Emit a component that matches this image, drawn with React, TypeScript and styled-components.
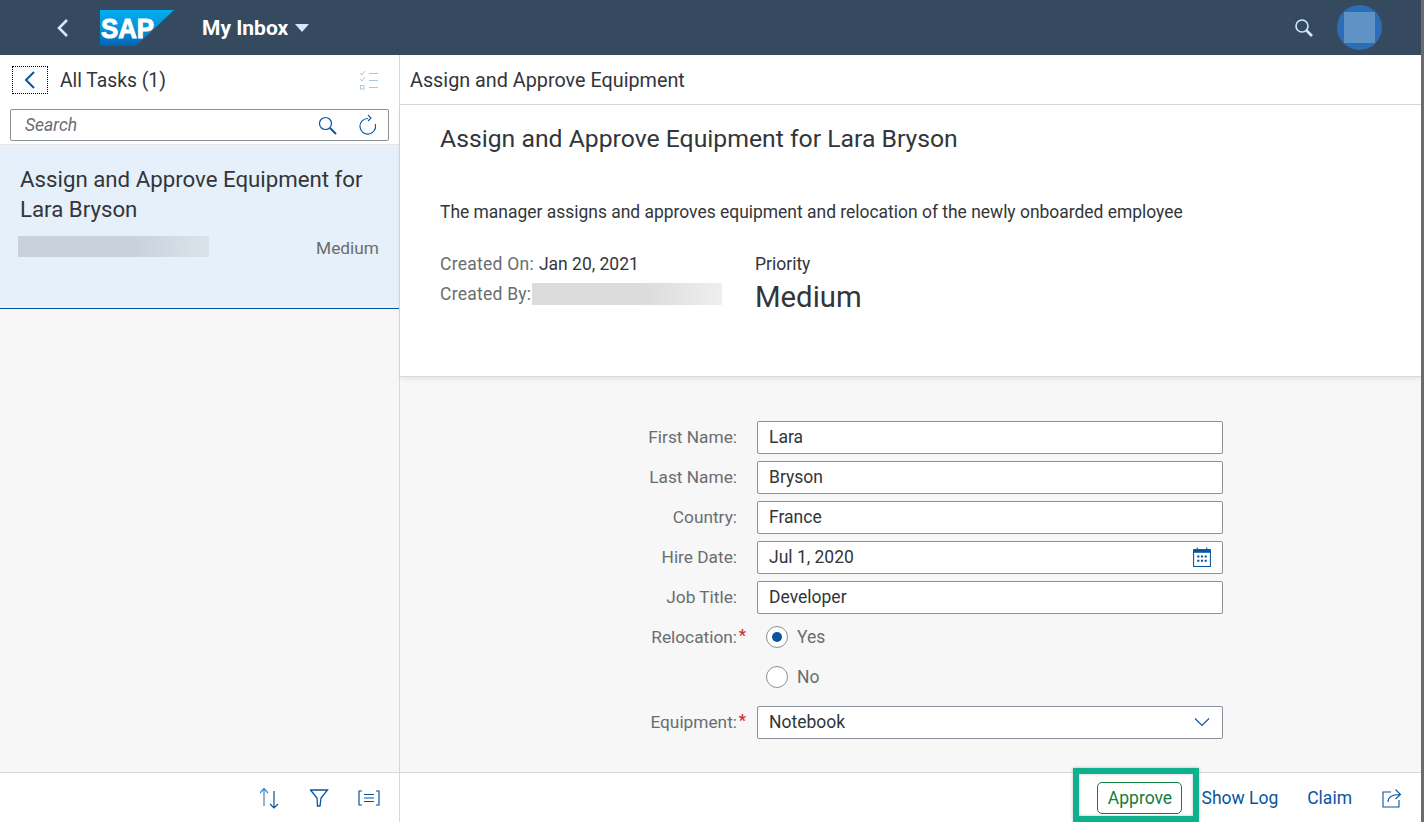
import React from "react";
import styled, { createGlobalStyle } from "styled-components";

const Global = createGlobalStyle`
  html, body { margin: 0; padding: 0; height: 100%; overflow: hidden; background: #fff; }
  body { font-family: Roboto, "Noto Sans", "Liberation Sans", sans-serif; color: #32363a; }
  * { box-sizing: border-box; }
`;
const Page = styled.div`
  width: 1424px; height: 822px; display: flex; flex-direction: column; position: relative; overflow: hidden; border-right: 3px solid #6b6b6b;
`;
const Shell = styled.header`
  height: 55px; flex: none; background: #354a5f; display: flex; align-items: center; padding-left: 55px; padding-right: 39px;
`;
const ShellBack = styled.svg`width: 16px; height: 20px; margin-right: 29px; flex: none;`;
const LogoWrap = styled.svg`width: 74px; height: 36px; flex: none; margin-right: 28px;`;
const AppTitle = styled.div`
  color: #fff; font-size: 21px; font-weight: 700; display: flex; align-items: center; gap: 7px;
`;
const Caret = styled.span`
  width: 0; height: 0; border-left: 7px solid transparent; border-right: 7px solid transparent; border-top: 8px solid #d1e8ff;
`;
const Spacer = styled.div`flex: 1;`;
const Avatar = styled.div`
  width: 45px; height: 45px; border-radius: 50%; background: #2a6fb5; display: flex; align-items: center; justify-content: center; margin-left: 23px;
`;
const AvatarFill = styled.div`width: 31px; height: 31px; background: #5f93c6;`;
const Body = styled.div`flex: 1; display: flex; min-height: 0;`;
const Master = styled.aside`
  width: 400px; flex: none; border-right: 1px solid #d9d9d9; background: #f7f7f7; display: flex; flex-direction: column;
`;
const MasterTop = styled.div`background: #fff; height: 90px; flex: none; border-bottom: 1px solid #e5e5e5;`;
const MasterBar = styled.div`height: 50px; display: flex; align-items: center; padding: 0 20px 0 12px;`;
const BackBox = styled.div`
  width: 36px; height: 28px; border: 1px dotted #000; display: flex; align-items: center; justify-content: center; margin-right: 12px;
`;
const MasterTitle = styled.div`font-size: 19.3px; flex: 1;`;
const SearchBox = styled.div`
  height: 32px; margin: 4px 10px 0; width: 379px; border: 1px solid #89919a; border-radius: 2px; background: #fff;
  display: flex; align-items: center; padding: 0 11px 0 14px; gap: 21px;
`;
const SearchText = styled.span`flex: 1; font-style: italic; color: #6a6d70; font-size: 17.5px;`;
const Item = styled.div`
  height: 164px; flex: none; background: #e5f0fa; border-bottom: 1px solid #0854a0; padding: 19px 20px 0 20px;
`;
const ItemTitle = styled.div`font-size: 22.25px; line-height: 30px;`;
const ItemMeta = styled.div`display: flex; justify-content: space-between; align-items: center; margin-top: 12px; margin-left: -2px;`;
const Blur = styled.div<{ $w: number; $h: number; $from: string; $to: string }>`
  width: ${(p) => p.$w}px; height: ${(p) => p.$h}px;
  background: linear-gradient(90deg, ${(p) => p.$from} 0%, ${(p) => p.$from} 60%, ${(p) => p.$to} 100%);
`;
const AuthorBlur = styled(Blur)`margin-left: -4px;`;
const Priority = styled.span`font-size: 17.3px; color: #6a6d70; position: relative; top: 1px;`;
const Detail = styled.main`flex: 1; display: flex; flex-direction: column; min-width: 0;`;
const DetailBar = styled.div`
  height: 50px; flex: none; display: flex; align-items: center; padding: 1px 0 0 10px; font-size: 19.8px; background: #fff; border-bottom: 1px solid #d9d9d9;
`;
const ObjectHead = styled.section`
  height: 272px; flex: none; padding: 17px 40px 0; background: #fff; border-bottom: 1px solid #d9d9d9; box-shadow: 0 2px 4px rgba(0,0,0,0.08); position: relative; z-index: 1;
`;
const ObjTitle = styled.h1`margin: 0; font-size: 24.75px; font-weight: 400; line-height: 34px;`;
const Desc = styled.p`margin: 44px 0 0; font-size: 17.45px; line-height: 24px;`;
const Attrs = styled.div`display: flex; margin-top: 28px;`;
const AttrCol = styled.div`width: 315px; display: flex; flex-direction: column; gap: 6px;`;
const AttrRow = styled.div`display: flex; align-items: center; height: 24px; font-size: 17.5px; gap: 5px;`;
const AttrLabel = styled.span`color: #6a6d70; letter-spacing: 0.25px;`;
const PriorityLabel = styled.div`font-size: 17.5px; line-height: 24px;`;
const PriorityValue = styled.div`font-size: 29.3px; line-height: 36px; margin-top: 3px;`;
const FormArea = styled.section`flex: 1; background: #f7f7f7; padding-top: 44px; min-height: 0;`;
const FormGrid = styled.div`
  display: grid; grid-template-columns: 347px 466px; column-gap: 10px; row-gap: 8px; grid-auto-rows: 32px; align-items: center;
`;
const Label = styled.div`
  text-align: right; font-size: 17.3px; color: #6a6d70; padding-right: 10px; position: relative;
`;
const Star = styled.span`color: #d32f2f; position: absolute; right: 1px; top: -1px; font-size: 16px; font-weight: 700;`;
const Input = styled.div`
  height: 33px; border: 1px solid #89919a; border-radius: 2px; background: #fff; display: flex; align-items: center; justify-content: space-between;
  padding: 0 11px 0 11px; font-size: 17.5px;
`;
const RadioRow = styled.div`display: flex; align-items: center; gap: 9px; padding-left: 9px; font-size: 17.5px; color: #6a6d70;`;
const Radio = styled.span<{ $on?: boolean }>`
  width: 22px; height: 22px; border-radius: 50%; border: 1px solid #89919a; background: #fff; display: flex; align-items: center; justify-content: center;
  &::after { content: ""; width: 10px; height: 10px; border-radius: 50%; background: ${(p) => (p.$on ? "#0854a0" : "transparent")}; }
`;
const EquipLabel = styled(Label)`margin-top: 10px;`;
const EquipInput = styled(Input)`margin-top: 10px; padding-right: 12px;`;
const Footer = styled.footer`
  height: 50px; flex: none; display: flex; border-top: 1px solid #d9d9d9; background: #fff;
`;
const FootLeft = styled.div`
  width: 400px; flex: none; border-right: 1px solid #d9d9d9; display: flex; align-items: center; justify-content: flex-end; padding-right: 19px; gap: 28px;
`;
const FootRight = styled.div`
  flex: 1; display: flex; align-items: center; justify-content: flex-end; padding-right: 19px;
`;
const ApproveBtn = styled.div`
  width: 85px; height: 32px; border: 1px solid #107e3e; border-radius: 5px; color: #107e3e; font-size: 17.5px;
  display: flex; align-items: center; justify-content: center; margin-right: 19px;
`;
const LinkBtn = styled.div<{ $mr: number }>`color: #0854a0; font-size: 17.5px; margin-right: ${(p) => p.$mr}px;`;
const Highlight = styled.div`
  position: absolute; left: 1073px; top: 768px; width: 126px; height: 54px; border: 6px solid #0fb08d; box-shadow: 0 0 3px rgba(0,0,0,0.25), inset 0 0 3px rgba(0,0,0,0.25); pointer-events: none;
`;
const Ico = styled.svg`flex: none; display: block;`;

const B = "#0854a0";

const Logo = () => (
  <LogoWrap viewBox="0 0 74 36">
    <defs>
      <linearGradient id="sapg" x1="0" y1="0" x2="0" y2="1">
        <stop offset="0" stopColor="#00aeef" />
        <stop offset="0.55" stopColor="#0a8fd8" />
        <stop offset="1" stopColor="#0063b5" />
      </linearGradient>
    </defs>
    <polygon points="0,0 74,0 36,36 0,36" fill="url(#sapg)" />
    <text x="1" y="28" fontFamily="Liberation Sans" fontWeight="700" fontSize="27.5" fill="#fff" stroke="#fff" strokeWidth="1" textLength="53" lengthAdjust="spacingAndGlyphs">SAP</text>
  </LogoWrap>
);

const Row = ({ label, value, icon }: { label: string; value: string; icon?: React.ReactNode }) => (
  <>
    <Label>{label}</Label>
    <Input>{value}{icon}</Input>
  </>
);

export default function App() {
  return (
    <Page>
      <Global />
      <Shell>
        <ShellBack viewBox="0 0 16 20"><path d="M12 2 L4 10 L12 18" fill="none" stroke="#d1e8ff" strokeWidth="2.6" /></ShellBack>
        <Logo />
        <AppTitle>My Inbox <Caret /></AppTitle>
        <Spacer />
        <Ico width="20" height="20" viewBox="0 0 20 20">
          <circle cx="8" cy="8" r="6" fill="none" stroke="#d1e8ff" strokeWidth="1.6" />
          <path d="M12.5 12.5 L18 18" stroke="#d1e8ff" strokeWidth="2.6" />
        </Ico>
        <Avatar><AvatarFill /></Avatar>
      </Shell>
      <Body>
        <Master>
          <MasterTop>
            <MasterBar>
              <BackBox>
                <Ico width="14" height="20" viewBox="0 0 14 20"><path d="M11 2 L3 10 L11 18" fill="none" stroke={B} strokeWidth="2" /></Ico>
              </BackBox>
              <MasterTitle>All Tasks (1)</MasterTitle>
              <Ico width="20" height="20" viewBox="0 0 20 20" fill="none" stroke="#a9c6e3" strokeWidth="1">
                <path d="M1 3 L3 5 L6 1 M1 9 L3 11 L6 7" />
                <rect x="1.5" y="15.5" width="3.5" height="3.5" />
                <path d="M10 3.5 H19 M10 10.5 H19 M10 17.5 H19" />
              </Ico>
            </MasterBar>
            <SearchBox>
              <SearchText>Search</SearchText>
              <Ico width="19" height="19" viewBox="0 0 19 19" fill="none" stroke={B}>
                <circle cx="7.5" cy="7.5" r="6" strokeWidth="1.2" />
                <path d="M12 12 L18 18" strokeWidth="2" />
              </Ico>
              <Ico width="19" height="20" viewBox="0 0 19 20" fill="none" stroke={B} strokeWidth="1.1">
                <path d="M10 3.5 A7.8 7.8 0 1 0 17.2 9" />
                <path d="M8 0.5 L11 3.5 L8 6.5" transform="translate(2 -0.5)" />
              </Ico>
            </SearchBox>
          </MasterTop>
          <Item>
            <ItemTitle>Assign and Approve Equipment for Lara Bryson</ItemTitle>
            <ItemMeta>
              <Blur $w={191} $h={21} $from="#c9d2dc" $to="#dbe3ea" />
              <Priority>Medium</Priority>
            </ItemMeta>
          </Item>
        </Master>
        <Detail>
          <DetailBar>Assign and Approve Equipment</DetailBar>
          <ObjectHead>
            <ObjTitle>Assign and Approve Equipment for Lara Bryson</ObjTitle>
            <Desc>The manager assigns and approves equipment and relocation of the newly onboarded employee</Desc>
            <Attrs>
              <AttrCol>
                <AttrRow><AttrLabel>Created On:</AttrLabel>Jan 20, 2021</AttrRow>
                <AttrRow>
                  <AttrLabel>Created By:</AttrLabel>
                  <AuthorBlur $w={190} $h={22} $from="#dcdcdc" $to="#efefef" />
                </AttrRow>
              </AttrCol>
              <div>
                <PriorityLabel>Priority</PriorityLabel>
                <PriorityValue>Medium</PriorityValue>
              </div>
            </Attrs>
          </ObjectHead>
          <FormArea>
            <FormGrid>
              <Row label="First Name:" value="Lara" />
              <Row label="Last Name:" value="Bryson" />
              <Row label="Country:" value="France" />
              <Row
                label="Hire Date:"
                value="Jul 1, 2020"
                icon={
                  <Ico width="18" height="20" viewBox="0 0 17 19">
                    <rect x="0.5" y="2.5" width="16" height="16" fill="none" stroke={B} />
                    <rect x="0.5" y="2.5" width="16" height="3" fill={B} />
                    <path d="M4 0.5 V3 M13 0.5 V3" stroke={B} />
                    <path d="M4 8 h2 v2 h-2z M7.5 8 h2 v2 h-2z M11 8 h2 v2 h-2z M4 12 h2 v2 h-2z M7.5 12 h2 v2 h-2z M11 12 h2 v2 h-2z" fill={B} />
                  </Ico>
                }
              />
              <Row label="Job Title:" value="Developer" />
              <Label>Relocation:<Star>*</Star></Label>
              <RadioRow><Radio $on />Yes</RadioRow>
              <div />
              <RadioRow><Radio />No</RadioRow>
              <EquipLabel>Equipment:<Star>*</Star></EquipLabel>
              <EquipInput>
                Notebook
                <Ico width="16" height="10" viewBox="0 0 16 10"><path d="M1 1.5 L8 8.5 L15 1.5" fill="none" stroke={B} strokeWidth="1.1" /></Ico>
              </EquipInput>
            </FormGrid>
          </FormArea>
        </Detail>
      </Body>
      <Footer>
        <FootLeft>
          <Ico width="22" height="22" viewBox="0 0 22 22" fill="none" stroke="#3d86c9" strokeWidth="1.2">
            <path d="M4 19 V2 M0 6 L4 1.5 L8 6" />
            <path d="M14 4 V21 M10 17 L14 21 L18 17" stroke={B} />
          </Ico>
          <Ico width="20" height="20" viewBox="0 0 20 20" fill="none" stroke={B} strokeWidth="1.3">
            <path d="M0.5 2 H17.5 L11 10 L10 18 L7.5 18 L7 10 Z" />
          </Ico>
          <Ico width="22" height="16" viewBox="0 0 22 16" fill="none" stroke={B} strokeWidth="1.2">
            <path d="M4 1 H1 V15 H4 M18 1 H21 V15 H18 M6 4.5 H16 M6 8 H16 M6 11.5 H16" />
          </Ico>
        </FootLeft>
        <FootRight>
          <ApproveBtn>Approve</ApproveBtn>
          <LinkBtn $mr={29}>Show Log</LinkBtn>
          <LinkBtn $mr={30}>Claim</LinkBtn>
          <Ico width="20" height="20" viewBox="0 0 20 20" fill="none" stroke={B} strokeWidth="1.1">
            <path d="M9 4 H1 V19 H17 V12" />
            <path d="M6 14 C6 9 10 6.5 18 6.5 M13.5 1.5 L18.5 6.5 L13.5 11" />
          </Ico>
        </FootRight>
      </Footer>
      <Highlight />
    </Page>
  );
}
